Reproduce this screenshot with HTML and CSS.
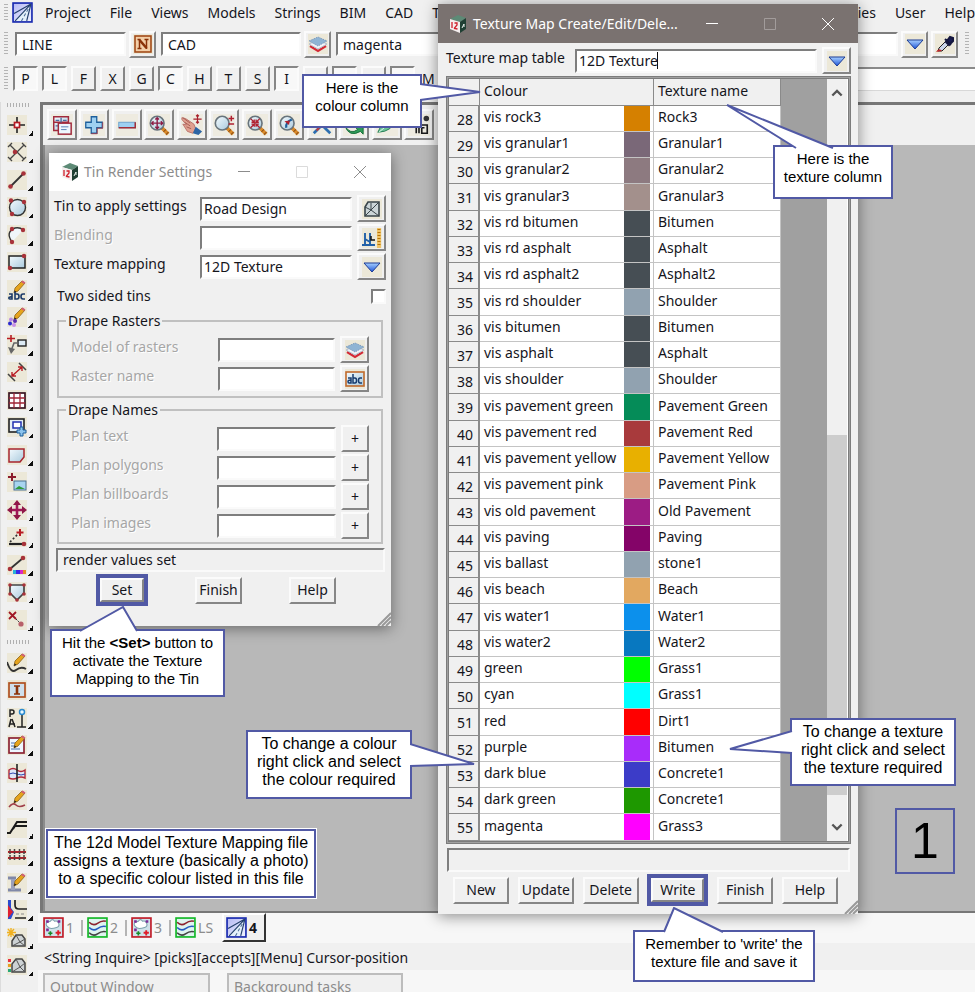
FILE: index.html
```html
<!DOCTYPE html>
<html lang="en">
<head>
<meta charset="utf-8">
<title>12d Model</title>
<link rel="stylesheet" href="styles.css">
</head>
<body>
<svg class="defs" aria-hidden="true">
  <defs>
    <linearGradient id="blueGlass" x1="0" y1="0" x2="1" y2="1"><stop offset="0" stop-color="#f4fbff"/><stop offset="1" stop-color="#a9c9dc"/></linearGradient>
    <linearGradient id="arrowFill" x1="0" y1="0" x2="0" y2="1"><stop offset="0" stop-color="#a8d0ff"/><stop offset="1" stop-color="#1d55d8"/></linearGradient>
    <linearGradient id="lilac" x1="0" y1="0" x2="1" y2="1"><stop offset="0" stop-color="#b4b8f4"/><stop offset="1" stop-color="#f0f3ff"/></linearGradient>
  </defs>
  <symbol id="road" viewBox="0 0 20 20"><rect x="1" y="1" width="18" height="18" fill="url(#lilac)" stroke="#1a2bb0" stroke-width="1.600"/><path d="M2 18 18 2 13 18z" fill="#e4f0fa"/><path d="M2 11 18 2M3 18 18 2M14 18 18 2" stroke="#24406c" stroke-width="1.100" fill="none"/><path d="M9 18 17 4" stroke="#4c6c98" stroke-dasharray="3 2" fill="none"/></symbol>
  <symbol id="cube" viewBox="0 0 18 20"><path d="M1 5 9 1l8 3-6 4z" fill="#5d8a76"/><path d="M1 5l10 3v11L1 15z" fill="#f4eeee"/><path d="M11 8l6-4v11l-6 4z" fill="#1f3f33"/><path d="M3 8v6M5.500 9h2.500v2L5.500 14v.5l3 .5" stroke="#d0202c" stroke-width="1.300" fill="none"/><path d="M13 14l2-4v3" stroke="#e8f0ec" fill="none"/></symbol>
  <symbol id="down" viewBox="0 0 20 20"><path d="M2 6h16l-8 9z" fill="url(#arrowFill)" stroke="#1b3a94"/></symbol>
  <symbol id="layers" viewBox="0 0 20 20"><path d="M2 12l8 5 8-5" fill="none" stroke="#d42a35" stroke-width="2.200"/><path d="M1 10l9-4 9 4-9 5z" fill="#f2f4f8" stroke="#b5bfcc"/><path d="M1 7l9-4 9 4-9 5z" fill="#8fb4d4" stroke="#7f9cbc" stroke-dasharray="1.500 1"/></symbol>
  <symbol id="nbox" viewBox="0 0 20 20"><rect x="2" y="2" width="16" height="16" fill="#f3cfa8" stroke="#a24a18" stroke-width="1.600"/><path d="M6.500 6l7 8" stroke="#8a3208" stroke-width="2.600"/><path d="M4.500 5.500h3M4.500 14.500h4M6.500 6v8.500M11.500 5.500h4M13.500 6v9" stroke="#8a3208" stroke-width="1.500" fill="none"/></symbol>
  <symbol id="tin" viewBox="0 0 20 20"><path d="M6 3h11v14H3V8z" fill="#cbd5d8" stroke="#39444a" stroke-width="1.600"/><path d="M3 8l6 3 8-8M9 11l8 6M9 11l-6 6M9 11V4" stroke="#39444a" fill="none"/></symbol>
  <symbol id="measure" viewBox="0 0 20 20"><path d="M17 0v20" stroke="#f0c468" stroke-width="4"/><path d="M17 1v18" stroke="#b87408" stroke-width="3" stroke-dasharray="1 2"/><path d="M3 5v13M0 17h13M3 11l5 3M8 5v12" stroke="#2160a8" stroke-width="1.900" fill="none"/><path d="M9 8v4h4" stroke="#111" stroke-width="1.500" fill="none"/></symbol>
  <symbol id="abcbox" viewBox="0 0 20 20"><rect x="1" y="3" width="18" height="14" fill="url(#blueGlass)" stroke="#c06a2c" stroke-width="1.600"/><path d="M3 9h3v5H4q-1 0-1-1.500T6 11M8 5v9h2q1.500 0 1.500-2.500T10 9H8M17 9h-2q-1.500 0-1.500 2.500T15 14h2" stroke="#173b6e" stroke-width="1.500" fill="none"/></symbol>
  <symbol id="dropper" viewBox="0 0 20 20"><path d="M3 17l1-3 8-8 3 3-8 8z" fill="#ccd6ea" stroke="#222"/><path d="M10 5l6 6M11 8l4-5 3 1v3l-4 4z" stroke="#16183f" stroke-width="2" fill="#1a1d52"/><path d="M1 18q3-5 6-1z" fill="#c0282a"/></symbol>
  <symbol id="windows" viewBox="0 0 24 24"><path d="M3 3h16v6H3zM3 9h8v9H3z" fill="url(#blueGlass)" stroke="#a12a3c" stroke-width="1.600"/><path d="M11 4v6M5 7h4M13 7h4M5 13h4" stroke="#4a6ea0" stroke-width="1.500"/><rect x="8" y="10" width="14" height="12" fill="#eef7fd" stroke="#a12a3c" stroke-width="1.600"/><path d="M11 14h8M11 17h6" stroke="#5078b0"/></symbol>
  <symbol id="plus" viewBox="0 0 24 24"><path d="M9 3h6v6h6v6h-6v6H9v-6H3V9h6z" fill="#9ed0f2" stroke="#1d5f9c" stroke-width="1.400"/><path d="M9 21.500h6.500V15.500H21.500V9" stroke="#a24050" fill="none"/></symbol>
  <symbol id="minus" viewBox="0 0 24 24"><rect x="3" y="9" width="18" height="6" fill="#9ed0f2" stroke="#6aa0cc"/><path d="M3 15h18V9" stroke="#a22d38" stroke-width="1.600" fill="none"/></symbol>
  <symbol id="lens" viewBox="0 0 24 24"><path d="M15 15l7 7" stroke="#d98a2a" stroke-width="4"/><path d="M15 15l7 7" stroke="#8a4a12" stroke-dasharray="1 3" stroke-width="4"/><circle cx="10" cy="10" r="7.500" fill="url(#blueGlass)" stroke="#68747c" stroke-width="1.800"/></symbol>
  <symbol id="zoompan" viewBox="0 0 24 24"><use href="#lens"/><path d="M10 4v12M4 10h12M8 6l2-2 2 2M8 14l2 2 2-2M6 8l-2 2 2 2M14 8l2 2-2 2" stroke="#8c1c44" stroke-width="1.500" fill="none"/></symbol>
  <symbol id="hand" viewBox="0 0 24 24"><path d="M1 4l4 1 9 6 2 5-3 5-6-2-5-8 4 1-5-6z" fill="#e0a090" stroke="#b87068"/><path d="M2 4l8 6M4 9l6 4M6 14l5 2" stroke="#a35a50"/><path d="M13 21l3-7 7 5-4 4z" fill="#2d64a4"/><path d="M18 1v9M13.500 5.500h9M16.500 2.500l1.500-1.500 1.500 1.500M16.500 8.500l1.500 1.500 1.500-1.500" stroke="#a8202c" stroke-width="1.300" fill="none"/></symbol>
  <symbol id="zoompm" viewBox="0 0 24 24"><use href="#lens"/><path d="M17 5h6M20 2v6M17 11h6" stroke="#b02030" stroke-width="1.600"/></symbol>
  <symbol id="zoomfit" viewBox="0 0 24 24"><use href="#lens"/><path d="M5 5l4 4V6M5 5l4 4H6M15 5l-4 4V6M15 5l-4 4h3M5 15l4-4v3M5 15l4-4H6M15 15l-4-4v3M15 15l-4-4h3" stroke="#b02030" stroke-width="1.400" fill="none"/></symbol>
  <symbol id="zoomprev" viewBox="0 0 24 24"><use href="#lens"/><path d="M9 15q-1-6 6-9" stroke="#1d5f9c" stroke-width="2.400" fill="none"/><path d="M7 8l6-1-1 5z" fill="#b02030"/></symbol>
  <symbol id="tools" viewBox="0 0 24 24"><path d="M3 21 17 7M21 21 7 7" stroke="#2d6fb0" stroke-width="3"/><path d="M6 18l3-3" stroke="#c03a3a" stroke-width="2"/></symbol>
  <symbol id="swap" viewBox="0 0 24 24"><path d="M2 13q6 10 14 4l-3-3h9v8l-3-3q-12 7-17-6z" fill="#2f9c58" stroke="#146a36"/><path d="M5 9q8-7 14 0" stroke="#2d64a4" stroke-width="3" fill="none"/></symbol>
  <symbol id="leaf" viewBox="0 0 24 24"><path d="M2 20q4-12 18-14-1 13-18 14z" fill="#6ec49a" stroke="#217a50"/><path d="M3 20l12-10" stroke="#e8fff0"/></symbol>
  <symbol id="maze" viewBox="0 0 24 24"><path d="M1 8l6 2M4 5l4 5-2 4M9 21V9h6M12 21v-9h9v9h-6v-6h3" stroke="#1a1a1a" stroke-width="1.800" fill="none"/><circle cx="20" cy="5" r="3" fill="#333"/></symbol>

  <symbol id="t-point" viewBox="0 0 20 20"><path d="M10 2v16M2 10h16" stroke="#222" stroke-width="1.600"/><rect x="7.500" y="7.500" width="5" height="5" fill="#fff" stroke="#b81c24" stroke-width="1.700"/></symbol>
  <symbol id="t-cross" viewBox="0 0 20 20"><path d="M3 3l14 14M17 3 3 17M1 5l4-4M15 1l4 4M1 15l4 4M15 19l4-4" stroke="#444" stroke-width="1.300"/><circle cx="8" cy="10" r="2.300" fill="#a8323a"/></symbol>
  <symbol id="t-line" viewBox="0 0 20 20"><path d="M3 17 17 3" stroke="#333" stroke-width="1.800"/><circle cx="3.500" cy="16.500" r="2.300" fill="#a8323a"/><circle cx="16.500" cy="3.500" r="2.300" fill="#a8323a"/></symbol>
  <symbol id="t-circle" viewBox="0 0 20 20"><circle cx="10.500" cy="10.500" r="8" fill="url(#blueGlass)" stroke="#333" stroke-width="1.400"/><circle cx="4" cy="3.500" r="2.200" fill="#a8323a"/><circle cx="17" cy="5" r="2.200" fill="#a8323a"/><circle cx="5" cy="17" r="2.200" fill="#a8323a"/></symbol>
  <symbol id="t-arc" viewBox="0 0 20 20"><path d="M5 17Q-2 7 8 3q5-1 8 2z" fill="#f0f6fa"/><path d="M5 17Q-2 7 8 3q5-1 8 2" fill="none" stroke="#333" stroke-width="1.400"/><circle cx="5" cy="4" r="2.200" fill="#a8323a"/><circle cx="16" cy="5" r="2.200" fill="#a8323a"/><circle cx="5" cy="17" r="2.200" fill="#a8323a"/></symbol>
  <symbol id="t-rect" viewBox="0 0 20 20"><rect x="2" y="4" width="16" height="12" fill="url(#blueGlass)" stroke="#222" stroke-width="1.500"/><circle cx="17" cy="4" r="2.200" fill="#a8323a"/><circle cx="3" cy="16" r="2.200" fill="#a8323a"/></symbol>
  <symbol id="pencil" viewBox="0 0 20 20"><path d="M7 13l1-5 7-7 3 2-7 8z" fill="#e6a41c" stroke="#8a6218" stroke-width=".8"/><path d="M14 2l1.500-1.500 3 2L17 4z" fill="#d0607a"/><path d="M7 13l.5-2.500 2 1z" fill="#222"/></symbol>
  <symbol id="t-abc" viewBox="0 0 20 20"><use href="#pencil"/><path d="M2 14h3v5H3q-1.500 0-1-1.500L5 16.500M8 12v7h2q2 0 2-2.500T10 14H8M18 14h-2q-2 0-2 2.500T16 19h2" stroke="#1d3b6a" stroke-width="1.600" fill="none"/></symbol>
  <symbol id="t-paint" viewBox="0 0 20 20"><use href="#pencil"/><circle cx="4" cy="12.500" r="2" fill="#b98ae0"/><circle cx="8" cy="14" r="2" fill="#5a2ab0"/><circle cx="3" cy="16.500" r="2" fill="#2a2ad0"/><circle cx="7" cy="18" r="2" fill="#c890e8"/></symbol>
  <symbol id="t-leader" viewBox="0 0 20 20"><path d="M4 0v7M0 3.500h8" stroke="#b81c24" stroke-width="1.600"/><rect x="11" y="5" width="8" height="6" fill="#dceaf4" stroke="#222" stroke-width="1.400"/><path d="M11 8H7l-3 8" stroke="#666" stroke-width="1.600" fill="none"/><path d="M1 12l3 7 4-5z" fill="#666"/></symbol>
  <symbol id="t-dim" viewBox="0 0 20 20"><path d="M12 1l7 7M1 12l7 7" stroke="#444" stroke-width="1.500"/><path d="M5 14 15 5M5 10v4h4M11 5h4v4" stroke="#b81c24" stroke-width="1.400" fill="none"/></symbol>
  <symbol id="t-grid" viewBox="0 0 20 20"><rect x="2" y="3" width="16" height="15" fill="#fff" stroke="#3a1420" stroke-width="1.700"/><path d="M2 8h16M2 13h16M7 3v15M13 3v15" stroke="#a02434" stroke-width="1.300"/></symbol>
  <symbol id="t-viewadd" viewBox="0 0 20 20"><rect x="2" y="2" width="15" height="13" fill="#e4eef4" stroke="#222" stroke-width="1.600"/><rect x="6" y="5" width="8" height="6" fill="#fff" stroke="#2030b0" stroke-width="1.500"/><path d="M13 10h3v3h3v3h-3v3h-3v-3h-3v-3h3z" fill="#8cc4ee" stroke="#1d5f9c"/></symbol>
  <symbol id="t-poly" viewBox="0 0 20 20"><path d="M2 4h15v8l-4 5H2z" fill="url(#blueGlass)" stroke="#a8242c" stroke-width="1.500"/></symbol>
  <symbol id="t-image" viewBox="0 0 20 20"><path d="M5 1v8M1 5h8" stroke="#8c1c2c" stroke-width="2"/><rect x="7" y="9" width="12" height="9" fill="#a8d4f0" stroke="#4a7090"/><path d="M8 17l4-3 6 3z" fill="#2f9c38"/></symbol>
  <symbol id="t-move" viewBox="0 0 20 20"><path d="M10 2v16M2 10h16" stroke="#a01858" stroke-width="2.600"/><path d="M6 5l4-5 4 5zM6 15l4 5 4-5zM5 6l-5 4 5 4zM15 6l5 4-5 4z" fill="#901848"/></symbol>
  <symbol id="t-movept" viewBox="0 0 20 20"><path d="M2 17h15" stroke="#222" stroke-width="2.200"/><path d="M3 15 11 7" stroke="#333" stroke-width="1.600" stroke-dasharray="2 2"/><path d="M13 2v7M9.500 5.500h7" stroke="#b81c24" stroke-width="2"/><circle cx="17" cy="17" r="2.300" fill="#a8323a"/></symbol>
  <symbol id="t-colour" viewBox="0 0 20 20"><path d="M3 14 16 3" stroke="#333" stroke-width="1.800"/><circle cx="16" cy="3" r="2.300" fill="#a8323a"/><circle cx="3" cy="14" r="2.300" fill="#a8323a"/><path d="M6 15h3v4H6z" fill="#28b0d8"/><path d="M9 15h4v4H9z" fill="#3a28e8"/><path d="M13 15h3v4h-3z" fill="#d828c8"/><path d="M16 15h3v4h-3z" fill="#e88a28"/></symbol>
  <symbol id="t-shield" viewBox="0 0 20 20"><path d="M3 3h14v8l-7 7-7-7z" fill="url(#blueGlass)" stroke="#444" stroke-width="1.700"/><circle cx="3" cy="3" r="1.800" fill="#a8323a"/><circle cx="17" cy="3" r="1.800" fill="#a8323a"/><circle cx="3" cy="12" r="1.800" fill="#a8323a"/><circle cx="17" cy="12" r="1.800" fill="#a8323a"/><circle cx="10" cy="18" r="1.800" fill="#a8323a"/></symbol>
  <symbol id="t-delete" viewBox="0 0 20 20"><path d="M2 2l7 7M9 2 2 9" stroke="#a01824" stroke-width="1.800"/><path d="M9 9l4 4" stroke="#333" stroke-dasharray="2 1"/><circle cx="14" cy="14" r="2.600" fill="#b8606a"/></symbol>
  <symbol id="t-draw" viewBox="0 0 20 20"><path d="M0 9q4 12 9 8t10-1" stroke="#333" stroke-width="1.800" fill="none"/><use href="#pencil"/></symbol>
  <symbol id="t-ibox" viewBox="0 0 20 20"><rect x="2" y="3" width="16" height="14" fill="#cfe0ec" stroke="#b05020" stroke-width="1.700"/><path d="M10 6v8" stroke="#8a3208" stroke-width="2.600"/><path d="M7 6h6M7 14h6" stroke="#8a3208" stroke-width="1.600"/></symbol>
  <symbol id="t-rail" viewBox="0 0 20 20"><path d="M3 9V2h2q2 0 2 2t-2 2H3M4 11l-2 8M5 11l3 8M3 16h5M15 6v13M10 19h9" stroke="#222" stroke-width="1.500" fill="none"/><circle cx="15" cy="4" r="2.500" fill="#e8f8ff" stroke="#2a8ad0" stroke-width="1.500"/></symbol>
  <symbol id="t-form" viewBox="0 0 20 20"><rect x="2" y="3" width="15" height="15" fill="#eef6ff" stroke="#8c2434" stroke-width="1.700"/><path d="M4 8h9M4 11h7M4 14h9" stroke="#4870b0"/><use href="#pencil"/></symbol>
  <symbol id="t-section" viewBox="0 0 20 20"><path d="M2 7q4-3 8 0t8 0v8q-4-2-8 0t-8 0z" fill="#dfe8f8" stroke="#b02838" stroke-width="1.400"/><path d="M2 11q4-2 8 0t8 0" stroke="#3048b0" fill="none"/><path d="M10 1v18" stroke="#222" stroke-width="1.600"/></symbol>
  <symbol id="t-sketch" viewBox="0 0 20 20"><use href="#pencil"/><path d="M2 17q4-5 7-2t9 0" stroke="#a0404a" stroke-width="1.600" fill="none"/></symbol>
  <symbol id="t-kerb" viewBox="0 0 20 20"><path d="M0 15h3l7-11h10M6 11l2-3h12" stroke="#1a1a1a" stroke-width="2" fill="none"/></symbol>
  <symbol id="t-track" viewBox="0 0 20 20"><path d="M1 7h18M1 13h18" stroke="#a8242c" stroke-width="1.800"/><path d="M3 4v12M7.500 4v12M12.500 4v12M17 4v12" stroke="#444" stroke-width="1.500" stroke-dasharray="2 1"/></symbol>
  <symbol id="t-pipe" viewBox="0 0 20 20"><path d="M1 5h8M1 17h13" stroke="#8088a8" stroke-width="3"/><path d="M6 6v11" stroke="#9aa0bc" stroke-width="4"/><use href="#pencil"/></symbol>
  <symbol id="t-inter" viewBox="0 0 20 20"><path d="M1 0h3v8l3 4-3 7H1z" fill="#2a4ad0"/><path d="M1 5l5 7-5 6z" fill="#e02030"/><path d="M8 0v5q0 4 4 4h8M8 18h11" stroke="#222" stroke-width="1.700" fill="none"/><path d="M9 14h10" stroke="#888" stroke-dasharray="3 2"/></symbol>
  <symbol id="t-newtin" viewBox="0 0 20 20"><path d="M4 0v9M0 4.500h9M1 1l6 7M7 1 1 8" stroke="#f0b020" stroke-width="1.300"/><path d="M9 7h6l3 4v7H5v-5z" fill="#cdd2d4" stroke="#444" stroke-width="1.500"/><path d="M9 7l4 7 5-3M5 18l8-4 5 4" stroke="#555" fill="none"/></symbol>
  <symbol id="t-coltin" viewBox="0 0 20 20"><path d="M1 4h3v3H1z" fill="#e83040"/><path d="M1 9h3v3H1z" fill="#e8a020"/><path d="M1 14h3v3H1z" fill="#28a878"/><path d="M9 4h6l3 4v9H5v-8z" fill="#cdd2d4" stroke="#444" stroke-width="1.500"/><path d="M9 4l4 8 5-4M5 17l8-5 5 5" stroke="#555" fill="none"/></symbol>
  <symbol id="v-plan" viewBox="0 0 20 20"><rect x="1" y="1" width="18" height="18" fill="#cfe2ea" stroke="#c01c28" stroke-width="1.600"/><path d="M7 4q2-3 4 0 3-1 4 2t-2 4-5 1-4-2 0-4z" fill="#fff" stroke="#7ca0ac"/><path d="M3 3h2.500v2.500H3zM3 11h2.500v2.500H3zM14 3h2.500v2.500H14z" fill="#7a2a98"/><path d="M5 15.500h4M7 13.500v4" stroke="#188a28" stroke-width="1.600"/><path d="M12 15h5M14.500 12.500v5" stroke="#e01c28" stroke-width="1.800"/></symbol>
  <symbol id="v-sect" viewBox="0 0 20 20"><rect x="1" y="1" width="18" height="18" fill="#dff4f0" stroke="#14b828" stroke-width="1.600"/><path d="M2 5q4 4 8 1t8-2" stroke="#8c2430" stroke-width="1.500" fill="none"/><path d="M2 10q4 4 8 1t8-2" stroke="#245cc0" stroke-width="1.500" fill="none"/><path d="M2 15q4 4 8 1t8-2" stroke="#444" stroke-width="1.500" fill="none"/></symbol>
</svg>

<div class="app">
  <header class="menubar">
    <span class="grip"></span>
    <svg class="logo"><use href="#road"/></svg>
    <nav class="menu">
      <a href="#">Project</a><a href="#">File</a><a href="#">Views</a><a href="#">Models</a><a href="#">Strings</a><a href="#">BIM</a><a href="#">CAD</a><a href="#">Tins</a>
    </nav>
    <nav class="menu menu-end">
      <a href="#">Utilities</a><a href="#">User</a><a href="#">Help</a>
    </nav>
  </header>

  <div class="bar strings">
    <span class="grip"></span>
    <input class="field f-name" aria-label="String name" value="LINE">
    <button class="btn pick" aria-label="Names"><svg><use href="#nbox"/></svg></button>
    <input class="field f-model" aria-label="Model" value="CAD">
    <button class="btn pick" aria-label="Models"><svg><use href="#layers"/></svg></button>
    <input class="field f-colour" aria-label="Colour" value="magenta">
    <button class="btn pick" aria-label="Choose"><svg><use href="#down"/></svg></button>
    <button class="btn pick" aria-label="Eyedropper"><svg><use href="#dropper"/></svg></button>
    <span class="grip"></span>
  </div>

  <div class="bar toggles">
    <span class="grip"></span>
    <button class="toggle on">P</button><button class="toggle on">L</button><button class="toggle">F</button><button class="toggle">X</button><button class="toggle">G</button><button class="toggle on">C</button><button class="toggle">H</button><button class="toggle">T</button><button class="toggle">S</button><button class="toggle on">I</button><button class="toggle">D</button><button class="toggle on">O</button><button class="toggle">A</button><button class="toggle on">K</button><span class="mlabel">M</span>
    <input class="command" aria-label="Command">
  </div>

  <div class="main">
    <aside class="rail">
      <span class="hgrip"></span>
      <div class="tools">
        <button class="tool" aria-label="Point"><svg><use href="#t-point"/></svg></button>
        <button class="tool" aria-label="Intersect"><svg><use href="#t-cross"/></svg></button>
        <button class="tool" aria-label="Line"><svg><use href="#t-line"/></svg></button>
        <button class="tool" aria-label="Circle"><svg><use href="#t-circle"/></svg></button>
        <button class="tool" aria-label="Arc"><svg><use href="#t-arc"/></svg></button>
        <button class="tool" aria-label="Rectangle"><svg><use href="#t-rect"/></svg></button>
        <button class="tool" aria-label="Text"><svg><use href="#t-abc"/></svg></button>
        <button class="tool" aria-label="Symbol"><svg><use href="#t-paint"/></svg></button>
        <button class="tool" aria-label="Leader"><svg><use href="#t-leader"/></svg></button>
        <button class="tool" aria-label="Dimension"><svg><use href="#t-dim"/></svg></button>
        <button class="tool" aria-label="Table"><svg><use href="#t-grid"/></svg></button>
        <button class="tool" aria-label="Viewport"><svg><use href="#t-viewadd"/></svg></button>
        <button class="tool" aria-label="Polygon"><svg><use href="#t-poly"/></svg></button>
        <button class="tool" aria-label="Image"><svg><use href="#t-image"/></svg></button>
        <button class="tool" aria-label="Move"><svg><use href="#t-move"/></svg></button>
        <button class="tool" aria-label="Move point"><svg><use href="#t-movept"/></svg></button>
        <button class="tool" aria-label="Line colour"><svg><use href="#t-colour"/></svg></button>
        <button class="tool" aria-label="Boundary"><svg><use href="#t-shield"/></svg></button>
        <button class="tool" aria-label="Delete"><svg><use href="#t-delete"/></svg></button>
      </div>
      <span class="hgrip"></span>
      <div class="tools">
        <button class="tool" aria-label="Draw"><svg><use href="#t-draw"/></svg></button>
        <button class="tool" aria-label="Inquire"><svg><use href="#t-ibox"/></svg></button>
        <button class="tool" aria-label="Survey"><svg><use href="#t-rail"/></svg></button>
        <button class="tool" aria-label="Form"><svg><use href="#t-form"/></svg></button>
        <button class="tool" aria-label="Section"><svg><use href="#t-section"/></svg></button>
        <button class="tool" aria-label="Sketch"><svg><use href="#t-sketch"/></svg></button>
        <button class="tool" aria-label="Kerb"><svg><use href="#t-kerb"/></svg></button>
        <button class="tool" aria-label="Track"><svg><use href="#t-track"/></svg></button>
        <button class="tool" aria-label="Pipe"><svg><use href="#t-pipe"/></svg></button>
        <button class="tool" aria-label="Intersection"><svg><use href="#t-inter"/></svg></button>
        <button class="tool" aria-label="New tin"><svg><use href="#t-newtin"/></svg></button>
        <button class="tool" aria-label="Colour tin"><svg><use href="#t-coltin"/></svg></button>
      </div>
    </aside>

    <section class="content">
      <div class="workspace">
        <div class="viewbar">
          <button class="btn vbtn" aria-label="View menu"><svg><use href="#windows"/></svg></button>
          <button class="btn vbtn" aria-label="Add model"><svg><use href="#plus"/></svg></button>
          <button class="btn vbtn" aria-label="Remove model"><svg><use href="#minus"/></svg></button>
          <button class="btn vbtn" aria-label="Fit"><svg><use href="#zoompan"/></svg></button>
          <button class="btn vbtn" aria-label="Pan"><svg><use href="#hand"/></svg></button>
          <button class="btn vbtn" aria-label="Zoom"><svg><use href="#zoompm"/></svg></button>
          <button class="btn vbtn" aria-label="Zoom extents"><svg><use href="#zoomfit"/></svg></button>
          <button class="btn vbtn" aria-label="Previous"><svg><use href="#zoomprev"/></svg></button>
          <button class="btn vbtn" aria-label="Settings"><svg><use href="#tools"/></svg></button>
          <button class="btn vbtn" aria-label="Refresh"><svg><use href="#swap"/></svg></button>
          <button class="btn vbtn" aria-label="Shade"><svg><use href="#leaf"/></svg></button>
          <button class="btn vbtn" aria-label="Snap"><svg><use href="#maze"/></svg></button>
        </div>
        <div class="canvas"></div>
      </div>
      <nav class="views">
        <a href="#" class="view"><svg><use href="#v-plan"/></svg>1</a>
        <a href="#" class="view"><svg><use href="#v-sect"/></svg>2</a>
        <a href="#" class="view"><svg><use href="#v-plan"/></svg>3</a>
        <a href="#" class="view"><svg><use href="#v-sect"/></svg>LS</a>
        <a href="#" class="view current"><svg><use href="#road"/></svg>4</a>
      </nav>
      <p class="prompt">&lt;String Inquire&gt; [picks][accepts][Menu] Cursor-position</p>
      <div class="docks">
        <div class="dock">Output Window</div>
        <div class="dock">Background tasks</div>
      </div>
    </section>
  </div>

  <section class="window tin" aria-label="Tin Render Settings">
    <header class="titlebar">
      <svg class="cube"><use href="#cube"/></svg>
      <h2>Tin Render Settings</h2>
      <div class="sys">
        <svg viewBox="0 0 12 14"><path d="M0 6.500h12" /></svg>
        <svg viewBox="0 0 12 14" class="off"><path d="M.5 1.500h11v11H.5z"/></svg>
        <svg viewBox="0 0 12 14"><path d="M0 1l12 12M12 1 0 13"/></svg>
      </div>
    </header>
    <div class="tin-body">
      <div class="row"><label for="t1">Tin to apply settings</label><input id="t1" class="field" value="Road Design"><button class="btn pick" aria-label="Choose tin"><svg><use href="#tin"/></svg></button></div>
      <div class="row"><label for="t2" class="dim">Blending</label><input id="t2" class="field"><button class="btn pick" aria-label="Measure"><svg><use href="#measure"/></svg></button></div>
      <div class="row"><label for="t3">Texture mapping</label><input id="t3" class="field" value="12D Texture"><button class="btn pick" aria-label="Choose texture map"><svg><use href="#down"/></svg></button></div>
      <div class="row check"><label for="t4">Two sided tins</label><input id="t4" type="checkbox"></div>
      <fieldset class="rasters">
        <legend>Drape Rasters</legend>
        <div class="row"><label for="r1" class="dim">Model of rasters</label><input id="r1" class="field"><button class="btn pick" aria-label="Choose model"><svg><use href="#layers"/></svg></button></div>
        <div class="row"><label for="r2" class="dim">Raster name</label><input id="r2" class="field"><button class="btn pick" aria-label="Choose raster"><svg><use href="#abcbox"/></svg></button></div>
      </fieldset>
      <fieldset class="names">
        <legend>Drape Names</legend>
        <div class="row"><label for="n1" class="dim">Plan text</label><input id="n1" class="field"><button class="btn add">+</button></div>
        <div class="row"><label for="n2" class="dim">Plan polygons</label><input id="n2" class="field"><button class="btn add">+</button></div>
        <div class="row"><label for="n3" class="dim">Plan billboards</label><input id="n3" class="field"><button class="btn add">+</button></div>
        <div class="row"><label for="n4" class="dim">Plan images</label><input id="n4" class="field"><button class="btn add">+</button></div>
      </fieldset>
      <output class="message">render values set</output>
      <div class="actions">
        <span class="marked"><button class="btn">Set</button></span>
        <button class="btn">Finish</button>
        <button class="btn">Help</button>
      </div>
    </div>
    <svg class="corner" viewBox="0 0 14 14"><path d="M1 14 14 1M5 14l9-9M9 14l5-5"/></svg>
  </section>

  <section class="window texture" aria-label="Texture Map Create/Edit/Delete">
    <header class="titlebar">
      <svg class="cube"><use href="#cube"/></svg>
      <h2>Texture Map Create/Edit/Dele...</h2>
      <div class="sys">
        <svg viewBox="0 0 12 14"><path d="M0 6.500h12" /></svg>
        <svg viewBox="0 0 12 14" class="off"><path d="M.5 1.500h11v11H.5z"/></svg>
        <svg viewBox="0 0 12 14"><path d="M0 1l12 12M12 1 0 13"/></svg>
      </div>
    </header>
    <div class="texture-body">
      <div class="row"><label for="m1">Texture map table</label><span class="field entry"><input id="m1" value="12D Texture"><i class="caret"></i></span><button class="btn pick" aria-label="Choose table"><svg><use href="#down"/></svg></button></div>
      <div class="pane">
        <table>
          <colgroup><col class="c-num"><col class="c-colour"><col class="c-sw"><col class="c-sp"><col class="c-name"></colgroup>
          <thead><tr><th></th><th colspan="3">Colour</th><th>Texture name</th></tr></thead>
          <tbody>
            <tr><th>28</th><td class="colour">vis rock3</td><td class="sw" style="background:#d58000"></td><td class="sp"></td><td>Rock3</td></tr>
            <tr><th>29</th><td class="colour">vis granular1</td><td class="sw" style="background:#7a6878"></td><td class="sp"></td><td>Granular1</td></tr>
            <tr><th>30</th><td class="colour">vis granular2</td><td class="sw" style="background:#8d7a80"></td><td class="sp"></td><td>Granular2</td></tr>
            <tr><th>31</th><td class="colour">vis granular3</td><td class="sw" style="background:#a3908c"></td><td class="sp"></td><td>Granular3</td></tr>
            <tr><th>32</th><td class="colour">vis rd bitumen</td><td class="sw" style="background:#464e54"></td><td class="sp"></td><td>Bitumen</td></tr>
            <tr><th>33</th><td class="colour">vis rd asphalt</td><td class="sw" style="background:#464e54"></td><td class="sp"></td><td>Asphalt</td></tr>
            <tr><th>34</th><td class="colour">vis rd asphalt2</td><td class="sw" style="background:#464e54"></td><td class="sp"></td><td>Asphalt2</td></tr>
            <tr><th>35</th><td class="colour">vis rd shoulder</td><td class="sw" style="background:#91a2b0"></td><td class="sp"></td><td>Shoulder</td></tr>
            <tr><th>36</th><td class="colour">vis bitumen</td><td class="sw" style="background:#464e54"></td><td class="sp"></td><td>Bitumen</td></tr>
            <tr><th>37</th><td class="colour">vis asphalt</td><td class="sw" style="background:#464e54"></td><td class="sp"></td><td>Asphalt</td></tr>
            <tr><th>38</th><td class="colour">vis shoulder</td><td class="sw" style="background:#91a2b0"></td><td class="sp"></td><td>Shoulder</td></tr>
            <tr><th>39</th><td class="colour">vis pavement green</td><td class="sw" style="background:#058c58"></td><td class="sp"></td><td>Pavement Green</td></tr>
            <tr><th>40</th><td class="colour">vis pavement red</td><td class="sw" style="background:#a83a3c"></td><td class="sp"></td><td>Pavement Red</td></tr>
            <tr><th>41</th><td class="colour">vis pavement yellow</td><td class="sw" style="background:#e8b000"></td><td class="sp"></td><td>Pavement Yellow</td></tr>
            <tr><th>42</th><td class="colour">vis pavement pink</td><td class="sw" style="background:#d89c84"></td><td class="sp"></td><td>Pavement Pink</td></tr>
            <tr><th>43</th><td class="colour">vis old pavement</td><td class="sw" style="background:#9c1c84"></td><td class="sp"></td><td>Old Pavement</td></tr>
            <tr><th>44</th><td class="colour">vis paving</td><td class="sw" style="background:#840468"></td><td class="sp"></td><td>Paving</td></tr>
            <tr><th>45</th><td class="colour">vis ballast</td><td class="sw" style="background:#91a2b0"></td><td class="sp"></td><td>stone1</td></tr>
            <tr><th>46</th><td class="colour">vis beach</td><td class="sw" style="background:#e2a860"></td><td class="sp"></td><td>Beach</td></tr>
            <tr><th>47</th><td class="colour">vis water1</td><td class="sw" style="background:#0c90ec"></td><td class="sp"></td><td>Water1</td></tr>
            <tr><th>48</th><td class="colour">vis water2</td><td class="sw" style="background:#0878c0"></td><td class="sp"></td><td>Water2</td></tr>
            <tr><th>49</th><td class="colour">green</td><td class="sw" style="background:#00ff00"></td><td class="sp"></td><td>Grass1</td></tr>
            <tr><th>50</th><td class="colour">cyan</td><td class="sw" style="background:#00ffff"></td><td class="sp"></td><td>Grass1</td></tr>
            <tr><th>51</th><td class="colour">red</td><td class="sw" style="background:#ff0000"></td><td class="sp"></td><td>Dirt1</td></tr>
            <tr><th>52</th><td class="colour">purple</td><td class="sw" style="background:#a82cfa"></td><td class="sp"></td><td>Bitumen</td></tr>
            <tr><th>53</th><td class="colour">dark blue</td><td class="sw" style="background:#3c3cc8"></td><td class="sp"></td><td>Concrete1</td></tr>
            <tr><th>54</th><td class="colour">dark green</td><td class="sw" style="background:#1e9800"></td><td class="sp"></td><td>Concrete1</td></tr>
            <tr><th>55</th><td class="colour">magenta</td><td class="sw" style="background:#ff00ff"></td><td class="sp"></td><td>Grass3</td></tr>
          </tbody>
        </table>
        <div class="scroll">
          <svg viewBox="0 0 12 8"><path d="M2 7l4-4 4 4"/></svg>
          <span class="track-top"></span><span class="thumb"></span><span class="track-end"></span>
          <svg viewBox="0 0 12 8"><path d="M2 1l4 4 4-4"/></svg>
        </div>
      </div>
      <output class="message"></output>
      <div class="actions">
        <button class="btn">New</button>
        <button class="btn">Update</button>
        <button class="btn">Delete</button>
        <span class="marked"><button class="btn">Write</button></span>
        <button class="btn">Finish</button>
        <button class="btn">Help</button>
      </div>
    </div>
    <svg class="corner" viewBox="0 0 14 14"><path d="M1 14 14 1M5 14l9-9M9 14l5-5"/></svg>
  </section>

  <aside class="note n-colour-col">Here is the<br>colour column
    <svg class="tail" viewBox="0 0 62 20"><path d="M0 2 60 10 0 18"/></svg></aside>
  <aside class="note n-texture-col">Here is the<br>texture column
    <svg class="tail" viewBox="0 0 110 46"><path d="M70 44 1 1l106 43"/></svg></aside>
  <aside class="note n-set">Hit the <b>&lt;Set&gt;</b> button to<br>activate the Texture<br>Mapping to the Tin
    <svg class="tail" viewBox="0 0 60 26"><path d="M1 25 44 1l14 24"/></svg></aside>
  <aside class="note wide n-colour">To change a colour<br>right click and select<br>the colour required
    <svg class="tail" viewBox="0 0 66 26"><path d="M0 2l64 20-64 2"/></svg></aside>
  <aside class="note wide n-texture">To change a texture<br>right click and select<br>the texture required
    <svg class="tail" viewBox="0 0 66 26"><path d="M64 2 2 20l62 4"/></svg></aside>
  <aside class="note n-write">Remember to 'write' the<br>texture file and save it
    <svg class="tail" viewBox="0 0 62 26"><path d="M1 25 11 1l49 24"/></svg></aside>
  <aside class="note wide n-file">The 12d Model Texture Mapping file<br>assigns a texture (basically a photo)<br>to a specific colour listed in this file</aside>
  <div class="step">1</div>
</div>
</body>
</html>
```
FILE: styles.css
```css
* { box-sizing: border-box; }

body {
  margin: 0;
  overflow: hidden;
  background: #f0f0f0;
  color: #15151c;
  font: 14px/18px "Noto Sans", "Open Sans", sans-serif;
}

button, input { font: inherit; color: inherit; margin: 0; }
a { color: inherit; text-decoration: none; }
h2, p { margin: 0; font-weight: normal; }
svg { display: block; flex: none; }
.defs { position: absolute; width: 0; height: 0; }

.app { position: relative; display: flex; flex-direction: column; height: 100vh; overflow: hidden; }

/* shared controls */
.field {
  min-width: 0;
  height: 24px;
  padding: 0 4px;
  border: 2px solid;
  border-color: #7e7e7e #fafafa #fafafa #7e7e7e;
  border-radius: 0;
  background: #fff;
  outline: none;
}
.btn {
  padding: 0;
  border: 2px solid;
  border-color: #fbfbfb #868686 #868686 #fbfbfb;
  border-radius: 0;
  background: #f0f0f0;
}
.pick { display: flex; align-items: center; justify-content: center; flex: none; width: 27px; height: 27px; }
.pick svg { width: 20px; height: 20px; background: #ece8d8; }
.grip { flex: none; width: 4px; height: 24px; background: repeating-linear-gradient(#b4b4b4 0 1px, #f0f0f0 1px 3px); }

/* top bars */
.menubar { display: flex; align-items: center; height: 25px; padding-left: 4px; gap: 4px; }
.menubar .grip { height: 18px; }
.logo { width: 21px; height: 21px; }
.menu { display: flex; gap: 19px; padding-left: 8px; }
.menu-end { margin-left: auto; }
.bar { display: flex; align-items: center; gap: 3px; height: 38px; padding: 0 6px 0 4px; }
.bar .grip + * { margin-left: 4px; }
.bar .field { padding-left: 5px; }
.f-name { width: 111px; }
.f-model { width: 140px; }
.f-colour { flex: 1; }
.strings > .field:not(.f-name) { margin-left: 2px; }
.bar .pick:last-of-type { margin-right: 4px; }
.toggles { height: 31px; gap: 4px; padding-right: 0; }
.toggles .grip + * { margin-left: 1px; }
.toggle {
  width: 25px; height: 25px; padding: 0;
  border: 2px solid; border-color: #fbfbfb #868686 #868686 #fbfbfb;
  border-radius: 0; background: #f0f0f0;
}
.toggle.on { border-color: #868686 #fbfbfb #fbfbfb #868686; background: #f8f8f8; }
.mlabel { padding-left: 3px; }
.command { flex: 1; height: 24px; border: 0; border-top: 2px solid #8a8a8a; border-bottom: 1px solid #d8d8d8; border-radius: 0; background: #fff; }

/* body */
.main { display: flex; flex: 1; min-height: 0; padding-top: 8px; }
.rail { display: flex; flex-direction: column; width: 38px; padding-left: 6px; border-left: 1px solid #dcdcdc; }
.hgrip { width: 24px; height: 4px; margin: 1px 0 4px; background: repeating-linear-gradient(90deg, #b0b0b0 0 1px, #f0f0f0 1px 3px); }
.tools { display: flex; flex-direction: column; }
.tools + .hgrip { margin: 7px 0 5px; }
.tool {
  display: flex; align-items: center; width: 26px; height: 27px; padding: 0; border: 0;
  background: linear-gradient(135deg, transparent 50%, #111 50%) right 20px / 5px 5px no-repeat;
}
.tool:nth-child(even) { height: 28px; }
.tool svg { width: 20px; height: 20px; background: #ece8d8; }

.content { display: flex; flex-direction: column; flex: 1; min-width: 0; }
.workspace {
  display: flex; flex-direction: column; flex: 1; min-height: 0;
  margin-left: 2px;
  border: solid #777; border-width: 3px 0 2px 3px;
}
.viewbar { display: flex; gap: 3px; height: 40px; padding: 4px 4px 0; }
.vbtn { display: flex; align-items: center; justify-content: center; width: 30px; height: 31px; margin-right: -1px; }
.vbtn:nth-child(even) { margin-right: 0; }
.vbtn svg { width: 22px; height: 22px; background: #eeebe0; }
.canvas { flex: 1; border: solid #8c8c8c; border-width: 0 0 0 2px; background: #b8b8b8; }

.views { display: flex; align-items: flex-start; height: 30px; padding-left: 5px; background: #f7f7f7; color: #8c8c8c; }
.view { display: flex; align-items: center; gap: 2px; height: 29px; padding-right: 4px; }
.view svg { width: 21px; height: 21px; }
.view:not(:nth-last-child(-n+2))::after { content: ""; width: 2px; height: 16px; margin-left: 5px; background: #b4b4b4; }
.view:nth-last-child(2) { padding-right: 9px; }
.current { padding: 0 7px 0 2px; border: 2px solid; border-color: #fff #333 #333 #fff; background: #f0f0f0; color: #15151c; font-weight: bold; }
.prompt { height: 27px; padding: 6px 0 0 6px; }
.docks { display: flex; gap: 17px; height: 22px; padding: 3px 5px 0; overflow: hidden; background: #f7f7f7; color: #8c8c8c; }
.dock { width: 167px; padding: 3px 5px; border: 2px solid #bdbdbd; border-bottom: 0; background: #f0f0f0; }
.dock + .dock { width: 176px; }

/* windows */
.window { position: absolute; display: flex; flex-direction: column; background: #f0f0f0; box-shadow: 0 2px 14px rgba(0, 0, 0, .45); }
.titlebar { display: flex; align-items: center; }
.titlebar h2 { flex: 1; font-size: inherit; white-space: nowrap; }
.cube { width: 18px; height: 20px; }
.sys { display: flex; }
.sys svg { width: 12px; height: 14px; fill: none; stroke: currentColor; }
.sys .off { opacity: .3; }
.row { display: flex; align-items: center; height: 29px; }
.row label { flex: 1; white-space: nowrap; }
.window .row .field { height: 24px; padding: 0 2px; }
.dim { color: #a6a6a6; text-shadow: 1px 1px #fff; }
.message { display: block; height: 24px; padding: 1px 5px; border: 2px solid; border-color: #7e7e7e #fafafa #fafafa #7e7e7e; }
.actions { display: flex; align-items: center; }
.actions .btn { height: 27px; }
.marked { display: flex; border: 4px solid #5159a5; }
.marked .btn { height: 24px; }
.corner { position: absolute; right: 0; bottom: 0; width: 14px; height: 14px; fill: none; stroke: #999; stroke-width: 2; }

.tin { left: 49px; top: 153px; width: 342px; }
.tin .titlebar { height: 38px; padding: 0 25px 0 12px; gap: 5px; background: #fff; color: #8c8c8c; }
.tin .sys { gap: 46px; }
.tin-body { padding: 3px 5px 20px; }
.tin-body > .row .field { width: 152px; }
.row .pick { width: 29px; margin-left: 5px; }
.tin-body > .row label { padding-bottom: 6px; }
.row.check { height: 31px; padding-left: 3px; }
.tin-body > .check label { padding-bottom: 1px; }
.check input { appearance: none; width: 15px; height: 15px; border: 2px solid; border-color: #7e7e7e #fafafa #fafafa #7e7e7e; background: #fff; }
fieldset { margin: 0 3px; padding: 0 12px 0 12px; border: 2px solid #c0c0c0; min-width: 0; }
legend { margin-left: -5px; padding: 0 2px; }
fieldset .row label { padding-bottom: 5px; }
.rasters { padding-top: 5px; height: 86px; }
.rasters .field { width: 117px; }
.names { height: 143px; margin-top: 3px; padding-top: 5px; }
.names .field { width: 119px; }
.add { width: 28px; height: 27px; margin-left: 5px; }
.tin .message { margin: 4px 1px 0 2px; }
.tin .actions { gap: 47px; padding: 2px 42px 0; }
.tin .actions > .btn { width: 47px; }
.tin .marked { width: 52px; }
.tin .marked .btn { flex: 1; }

.texture { left: 438px; top: 4px; width: 420px; height: 910px; }
.texture .titlebar { height: 39px; padding: 0 24px 0 11px; gap: 6px; background: #7a7270; color: #fff; }
.texture .sys { gap: 46px; }
.texture-body { display: flex; flex-direction: column; flex: 1; padding: 3px 7px 0 8px; }
.texture-body > .row label { padding-bottom: 5px; }
.entry { position: relative; display: block; width: 242px; }
.entry input { width: 100%; height: 20px; padding: 0; border: 0; outline: none; background: none; }
.caret { position: absolute; left: 80px; top: 1px; width: 1px; height: 17px; background: #111; }
.pane { display: flex; margin-top: 1px; height: 768px; border: 3px double #7c7c7c; background: #a0a0a0; }
table { width: 332px; height: fit-content; border-collapse: separate; border-spacing: 0; table-layout: fixed; }
.c-num { width: 31px; }
.c-colour { width: 144px; }
.c-sw { width: 26px; }
.c-sp { width: 4px; }
.c-name { width: 127px; }
thead th { height: 27px; padding: 0 4px 2px; border-right: 1px solid #8a8a8a; border-bottom: 1px solid #8a8a8a; background: #f0f0f0; font-weight: normal; text-align: left; }
tbody tr { height: 26px; }
tbody tr:nth-child(4n) { height: 27px; }
tbody th { padding: 2px 5px 0 0; border-right: 2px solid #8a8a8a; border-bottom: 1px solid #8a8a8a; background: #f0f0f0; font-weight: normal; text-align: right; }
td { padding: 0 4px 3px; border-right: 1px solid #c4c4c4; border-bottom: 1px solid #c4c4c4; background: #fff; white-space: nowrap; }
td.colour { border-right: 0; }
td.sw, td.sp { padding: 0; }
td.sw { border-right: 0; }
.scroll { display: flex; flex-direction: column; align-items: center; width: 21px; margin-left: auto; padding: 8px 0; border-right: 1px solid #fff; background: #f0f0f0; }
.scroll svg { width: 14px; height: 10px; fill: none; stroke: #555; stroke-width: 2; }
.track-top { flex: 337; }
.thumb { flex: 358; align-self: stretch; background: #cdcdcd; }
.track-end { flex: 28; }
.texture .message { margin: 4px 1px 0; }
.texture .actions { justify-content: space-between; height: 34px; padding: 0 13px 0 7px; margin-top: 1px; }
.texture .actions .btn { width: 56px; }
.texture .marked .btn { width: 53px; }

/* notes */
.note {
  position: absolute;
  padding: 3px 0;
  border: 2px solid #5159a5;
  background: #fff;
  color: #000;
  font: 15px/18px "Liberation Sans", Arial, sans-serif;
  text-align: center;
  white-space: nowrap;
}
.wide { font-size: 16px; }
.tail { position: absolute; fill: #fff; stroke: #5159a5; stroke-width: 2; }
.n-colour-col { left: 302px; top: 74px; width: 120px; height: 54px; }
.n-colour-col .tail { left: 116px; top: 6px; width: 62px; height: 20px; }
.n-texture-col { left: 773px; top: 145px; width: 120px; height: 54px; }
.n-texture-col .tail { left: -49px; top: -43px; width: 110px; height: 46px; }
.n-set { left: 50px; top: 629px; width: 175px; height: 68px; }
.n-set .tail { left: 27px; top: -25px; width: 60px; height: 26px; }
.n-colour { left: 246px; top: 730px; width: 166px; height: 69px; }
.n-colour .tail { left: 162px; top: 10px; width: 66px; height: 26px; }
.n-texture { left: 790px; top: 718px; width: 166px; height: 68px; }
.n-texture .tail { left: -64px; top: 9px; width: 66px; height: 26px; }
.n-write { left: 633px; top: 930px; width: 182px; height: 52px; }
.n-write .tail { left: 28px; top: -25px; width: 62px; height: 26px; }
.n-file { left: 46px; top: 829px; width: 270px; height: 69px; outline: 1px solid #fff; }
.step { position: absolute; left: 895px; top: 808px; width: 60px; height: 66px; border: 2px solid #5159a5; color: #000; font: 50px/62px "Liberation Sans", Arial, sans-serif; text-align: center; }
```
